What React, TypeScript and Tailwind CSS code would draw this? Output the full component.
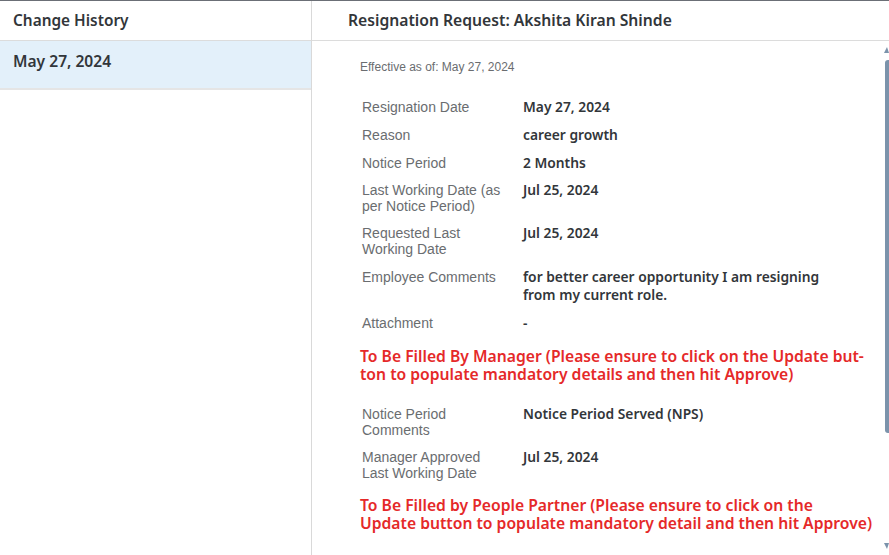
import React from "react";

type Row = { label: string[]; value: string[]; cls?: string };

const rows: Row[] = [
  { label: ["Resignation Date"], value: ["May 27, 2024"] },
  { label: ["Reason"], value: ["career growth"] },
  { label: ["Notice Period"], value: ["2 Months"], cls: "pb-[11px]" },
  { label: ["Last Working Date (as", "per Notice Period)"], value: ["Jul 25, 2024"], cls: "pb-[11px]" },
  { label: ["Requested Last", "Working Date"], value: ["Jul 25, 2024"] },
  {
    label: ["Employee Comments"],
    value: ["for better career opportunity I am resigning", "from my current role."],
  },
  { label: ["Attachment"], value: ["-"] },
];

const managerRows: Row[] = [
  { label: ["Notice Period", "Comments"], value: ["Notice Period Served (NPS)"], cls: "pb-[11px]" },
  { label: ["Manager Approved", "Last Working Date"], value: ["Jul 25, 2024"] },
];

const Field = ({ label, value, cls = "pb-3" }: Row) => (
  <div className={`flex ${cls}`}>
    <div
      className="w-[161px] shrink-0 text-[14px] leading-4 text-[#6a6d70]"
      style={{ fontFamily: '"Liberation Sans", Arial, sans-serif' }}
    >
      {label.map((l) => (
        <div key={l}>{l}</div>
      ))}
    </div>
    <div className="text-[13.8px] leading-[18px] -my-px font-semibold text-[#32363a]">
      {value.map((v) => (
        <div key={v}>{v}</div>
      ))}
    </div>
  </div>
);

const Notice = ({ lines }: { lines: string[] }) => (
  <div className="text-[15.7px] leading-[18px] font-semibold text-[#e52929]">
    {lines.map((l) => (
      <div key={l} className="whitespace-nowrap">
        {l}
      </div>
    ))}
  </div>
);

export default function App() {
  return (
    <div
      className="relative w-[889px] h-[555px] overflow-hidden bg-white"
      style={{ fontFamily: '"Noto Sans", Arial, sans-serif' }}
    >
      <div className="h-px bg-[#6b6f76]" />
      <div className="flex h-[554px]">
        {/* history list */}
        <div className="w-[312px] shrink-0 border-r border-[#d9d9d9]">
          <div className="h-10 flex items-center px-[13px] border-b border-[#dcdcdc] text-[15.4px] font-semibold text-[#32363a]">
            Change History
          </div>
          <div className="h-[49px] flex items-center pb-[6px] px-[13px] bg-[#e3f0fa] border-b-2 border-[#e5e5e5] text-[15.6px] font-semibold text-[#32363a]">
            May 27, 2024
          </div>
        </div>

        {/* detail */}
        <div className="flex-1 min-w-0">
          <div className="h-10 flex items-center pl-9 border-b border-[#dcdcdc] text-[15.7px] font-semibold text-[#32363a]">
            Resignation Request: Akshita Kiran Shinde
          </div>
          <div className="pl-[48px] pt-[18px]">
            <div
              className="text-[12px] text-[#6a6d70] leading-4 mb-[24px]"
              style={{ fontFamily: '"Liberation Sans", Arial, sans-serif' }}
            >
              Effective as of: May 27, 2024
            </div>
            <div className="pl-0.5">
              {rows.map((r) => (
                <Field key={r.label.join()} {...r} />
              ))}
            </div>
            <div className="mt-[4px] mb-[23px]">
              <Notice
                lines={[
                  "To Be Filled By Manager (Please ensure to click on the Update but-",
                  "ton to populate mandatory details and then hit Approve)",
                ]}
              />
            </div>
            <div className="pl-0.5">
              {managerRows.map((r) => (
                <Field key={r.label.join()} {...r} />
              ))}
            </div>
            <div className="mt-[3px]">
              <Notice
                lines={[
                  "To Be Filled by People Partner (Please ensure to click on the",
                  "Update button to populate mandatory detail and then hit Approve)",
                ]}
              />
            </div>
          </div>
        </div>
      </div>

      {/* scrollbar */}
      <div className="absolute right-0 top-[47px] w-[5px] h-0 border-l-[3px] border-r-[2px] border-b-[6px] border-l-transparent border-r-transparent border-b-[#7b93ab]" />
      <div className="absolute right-0 top-[60px] w-[4px] h-[373px] rounded-l-[3px] bg-[#7b93ab]" />
      <div className="absolute right-0 top-[543px] w-[5px] h-0 border-l-[3px] border-r-[2px] border-t-[6px] border-l-transparent border-r-transparent border-t-[#7b93ab]" />
    </div>
  );
}
